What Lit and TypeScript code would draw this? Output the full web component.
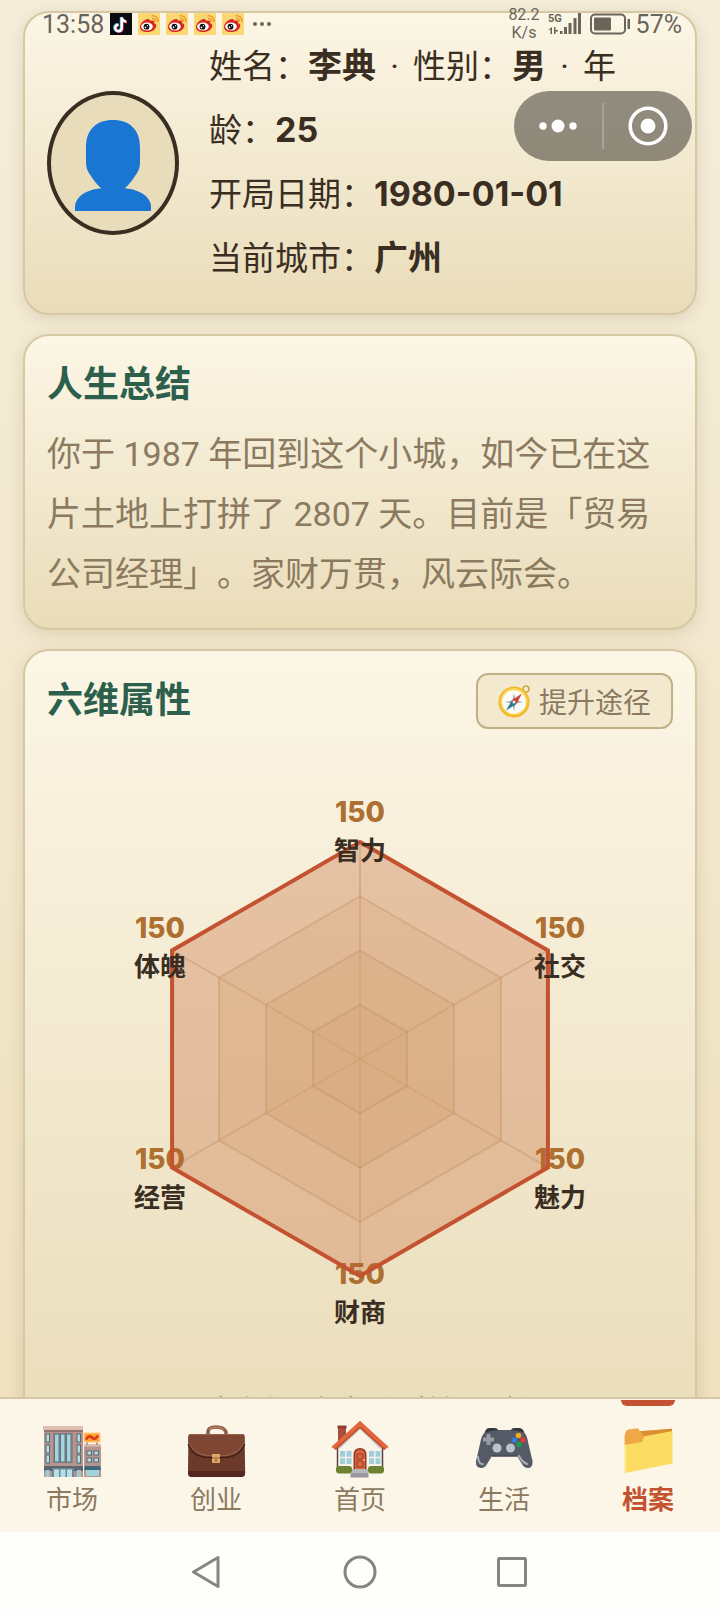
import { LitElement, html, svg, css } from 'lit';
import { customElement, property } from 'lit/decorators.js';
import { classMap } from 'lit/directives/class-map.js';

interface Stat {
  name: string;
  value: number;
}

const MAX_STAT = 150;

const stats: Stat[] = [
  { name: '智力', value: 150 },
  { name: '社交', value: 150 },
  { name: '魅力', value: 150 },
  { name: '财商', value: 150 },
  { name: '经营', value: 150 },
  { name: '体魄', value: 150 },
];

const marketIcon = svg`
  <rect x="2" y="9" width="39" height="48" fill="#b7958f" />
  <rect x="1" y="6" width="40" height="4" fill="#e0bfb0" />
  <rect x="2" y="10" width="39" height="2" fill="#94746f" />
  <rect x="11" y="13" width="20" height="30" fill="#9c7d7a" />
  ${[12, 18, 24].map((x) => svg`<rect x=${x + 0.5} y="14" width="4.5" height="28" fill="#a9d3da" stroke="#557888" />`)}
  ${[14, 25, 35].map(
    (y) => svg`
      <rect x="4" y=${y} width="3.5" height="8" fill="#b9dce0" stroke="#4f6c7c" />
      <rect x="35" y=${y} width="3.5" height="8" fill="#b9dce0" stroke="#4f6c7c" />`
  )}
  <path d="M2 46h39v5H2z" fill="#5d6670" />
  <path d="M10 48h22v9H10z" fill="#6d8792" />
  ${[12, 18.5, 25].map((x) => svg`<rect x=${x} y="49.5" width="5" height="7.5" fill="#b5e0e6" />`)}
  <rect x="3.5" y="50" width="4" height="7" fill="#9ccbd2" />
  <rect x="35" y="50" width="4" height="7" fill="#9ccbd2" />
  <rect x="42" y="25" width="17" height="32" fill="#b7958f" />
  <rect x="42" y="24" width="17" height="2.5" fill="#e0bfb0" />
  <path d="M45 21v4M55 21v4" stroke="#8b8d92" stroke-width="1.5" />
  <rect x="42" y="13" width="16" height="9" fill="#ffa52e" stroke="#ffcf8a" />
  <path d="M44 19.500q3-5 6-2t6-2" fill="none" stroke="#d9381e" stroke-width="2.500" />
  ${[31, 38].map(
    (y) => svg`
      <rect x="45" y=${y} width="4.5" height="4" fill="#b9dce0" stroke="#4f6c7c" />
      <rect x="52" y=${y} width="4.5" height="4" fill="#b9dce0" stroke="#4f6c7c" />`
  )}
  <path d="M43 46h15l1 4H42z" fill="#3b6a7c" />
  <rect x="44" y="50" width="13" height="6" fill="#a3d3da" />`;

const briefcaseIcon = svg`
  <path d="M22 15v-3q0-5 8-5t10 5v3" fill="none" stroke="#8d5a44" stroke-width="3.500" />
  <path d="M23 10q2-3 7-3t8 3" fill="none" stroke="#c08a6c" stroke-width="1.200" />
  <path d="M5 14h51q2.500 0 2.600 3l.6 36q0 4-4 4H6q-4 0-4-4l.4-36q0-3 2.600-3z" fill="#6c3a2b" />
  <path d="M2 51h57v2q0 4-4 4H6q-4 0-4-4z" fill="#53291f" />
  <path d="M5 14h51q2.500 0 2.600 3v8Q54 36 40 37H21Q6 36 2.300 25v-8q.2-3 2.700-3z" fill="#7e4734" />
  <path d="M2.300 24Q6 36 21 37.500h19Q54 36 58.700 24" fill="none" stroke="#3f1f17" stroke-width="1.600" />
  <path d="M2.600 22.500Q7 34 21 35.500h19Q53 34 58.400 22.500" fill="none" stroke="#9c6a52" stroke-width=".8" />
  <path d="M4 14.500h53" stroke="#96604a" stroke-width="1" />
  <rect x="26" y="34" width="8" height="9" rx="1" fill="#e2a868" />
  <path d="M26 38h8" stroke="#8b5a34" stroke-width="1" />
  <circle cx="30" cy="40.500" r="1" fill="#7a4a2a" />`;

const homeIcon = svg`
  <rect x="8" y="6" width="8" height="18" fill="#a84e3c" />
  <rect x="7.500" y="5.500" width="9" height="3" fill="#8d3f32" />
  <path d="M8 26L30 6l22 20v25H8z" fill="#f9f4ea" />
  <path d="M7.500 28v23M52.500 28v23" stroke="#51453f" stroke-width="1.500" />
  <path d="M9 28L30 8l21 20" fill="none" stroke="#cdbdb0" stroke-width="2" />
  <rect x="10" y="31" width="11.500" height="13" fill="#9fd0da" />
  <rect x="39" y="31" width="11.500" height="13" fill="#9fd0da" />
  <path d="M10 37.500h11.500M15.800 31v13M39 37.500h11.500M44.800 31v13" stroke="#f5f1ea" stroke-width="1.500" />
  <path d="M23.500 49V35q0-7 6.500-7t6.500 7v14z" fill="#8e3d2a" />
  <path d="M25 49V35q0-5.500 5-5.500t5 5.500v14z" fill="#d9643f" />
  <path d="M27 34h6v5h-6zM27 41h6v6h-6z" fill="none" stroke="#9f4127" />
  <circle cx="34" cy="40" r="1" fill="#ffd04f" />
  <rect x="6" y="46" width="16" height="7.500" rx="3" fill="#6d8232" />
  <rect x="38" y="46" width="16" height="7.500" rx="3" fill="#6d8232" />
  <path d="M22 49h16v4H22z" fill="#b8b8bb" />
  <path d="M20.500 53h18v4.500h-18z" fill="#97979d" />
  <path d="M30 .7L58.700 27l-4 2.600L30 7.300 5.300 29.600l-4-2.600z" fill="#e2663b" />
  <path d="M5.300 29.600L30 7.300l24.700 22.300" fill="none" stroke="#b5442b" stroke-width="1.300" />`;

const gamepadIcon = svg`
  <path d="M11 12q1-4 5-4h4q3 0 4 2h13q1-2 4-2h3q5 0 6 4 3 3 4.500 12L58.500 41q.5 7-4.500 7-4 0-6-4l-5-8H18l-5 8q-2 4-6 4-5.500 0-5-7L6 24q1.500-9 5-12z" fill="#555b66" />
  <path d="M11 12.500q1-4.500 5-4.500h4q3 0 4 2-6 .5-13 2.500zM50 12.500q-1-4.500-6-4.500h-3q-3 0-4 2 6 .5 13 2.500z" fill="#343840" />
  <path d="M18 36h25" fill="none" stroke="#444954" stroke-width="1.500" />
  <path d="M4 37q1 8 5 7" fill="none" stroke="#a9aeb8" stroke-width="2" stroke-linecap="round" />
  <path d="M45 36q3 6 8 8" fill="none" stroke="#a9aeb8" stroke-width="2" stroke-linecap="round" />
  <path d="M14.500 14v11M9 19.500h11" stroke="#989da7" stroke-width="4" />
  <circle cx="23" cy="28" r="4.500" fill="#bcc3cc" />
  <circle cx="36.500" cy="28" r="4.500" fill="#bcc3cc" />
  <circle cx="44.500" cy="15.500" r="2.800" fill="#f4a62a" />
  <circle cx="40.300" cy="20" r="2.800" fill="#2f7de1" />
  <circle cx="49" cy="20" r="2.800" fill="#dc3b36" />
  <circle cx="45" cy="24.500" r="2.800" fill="#1f9b4c" />`;

const folderIcon = svg`
  <path d="M6.500 16l1.500-5 2-1.500L20 8.300l2 3 32-2.500V40L7 50z" fill="#f0a846" />
  <path d="M22 11.300l32-2.500v3L26 16z" fill="#d98e2f" />
  <path d="M6 25l18-3 2-5.500L54.500 11v32.500L6.500 53.300z" fill="#fddc63" />
  <path d="M6.500 53.300L6 25l1.500-.3.500 27.800z" fill="#fff0a8" />`;

const tabs = [
  { label: '市场', icon: marketIcon },
  { label: '创业', icon: briefcaseIcon },
  { label: '首页', icon: homeIcon },
  { label: '生活', icon: gamepadIcon },
  { label: '档案', icon: folderIcon },
];

/**
 * `<status-bar>` – Phone status line laid over the top of the page.
 */
@customElement('status-bar')
export class StatusBar extends LitElement {
  static styles = css`
    :host {
      display: flex;
      align-items: center;
      height: 48px;
      padding: 0 38px 0 42px;
      box-sizing: border-box;
      color: #6a655b;
      font-family: Roboto, 'Noto Sans CJK SC', sans-serif;
      font-size: 25px;
    }

    svg {
      display: block;
      flex: none;
    }

    .apps {
      display: flex;
      gap: 6px;
      margin: 0 8px 0 6px;
    }

    .right {
      display: flex;
      align-items: center;
      gap: 8px;
      margin-left: auto;
    }

    .speed {
      font-size: 16px;
      line-height: 18px;
      text-align: center;
    }

    .level {
      display: flex;
      align-items: center;
      gap: 5px;
    }
  `;

  renderWeibo() {
    return html`
      <svg width="22" height="22" viewBox="0 0 22 22">
        <rect width="22" height="22" rx="1" fill="#fcd874" />
        <path d="M2 14c0-4 5-8 8-8 2 0 2 1 2 2 3-1 5 0 4 2 2 1 3 2 2 4-1 3-5 5-9 5s-7-2-7-5z" fill="#d8271f" />
        <ellipse cx="9" cy="13.500" rx="5.800" ry="4" fill="#fff" />
        <circle cx="8.500" cy="13.700" r="2.900" fill="#111" />
        <circle cx="7.500" cy="14.300" r=".9" fill="#fff" />
        <circle cx="9.500" cy="12.700" r=".6" fill="#fff" />
        <path d="M14 5.500q3-.5 3.500 3.500M13.500 2.800q6.500-.5 6.500 6.200" fill="none" stroke="#ee9a2c" stroke-width="1.500" />
      </svg>
    `;
  }

  render() {
    return html`
      <span>13:58</span>
      <div class="apps">
        <svg width="22" height="22" viewBox="0 0 22 22">
          <rect width="22" height="22" fill="#0b0912" />
          <g fill="none" stroke-width="2.400">
            <path d="M11 4v10.500a3.300 3.300 0 1 1-3.300-3.300M11 4c.3 2.500 2 4 4.500 4.200" stroke="#39d8d8" />
            <path d="M12.500 5v10.500A3.300 3.300 0 1 1 9 12M12.500 5c.3 2.500 2 4 4.500 4.200" stroke="#ee3157" />
            <path d="M11.800 4.400V15a3.300 3.300 0 1 1-3.300-3.300M11.800 4.400c.3 2.500 2 4 4.500 4.200" stroke="#fff" />
          </g>
        </svg>
        ${[0, 1, 2, 3].map(() => this.renderWeibo())}
      </div>
      <svg width="20" height="6" viewBox="0 0 20 6" fill="currentColor">
        <circle cx="3" cy="3" r="2" />
        <circle cx="10" cy="3" r="2" />
        <circle cx="17" cy="3" r="2" />
      </svg>
      <div class="right">
        <div class="speed">82.2<br />K/s</div>
        <svg width="34" height="22" viewBox="0 0 34 22" fill="currentColor">
          <text x="0" y="9" font-size="11" font-weight="700">5G</text>
          <path d="M4 14v7H2.500v-4.500L0 17zM6 14h1.500v3H10v1.500H7.500V21H6zM12 18h2.500v3H12zM16 14h3v7h-3zM20.500 10h3v11h-3zM25.500 5h3v16h-3zM30 0h3v21h-3z" />
        </svg>
        <div class="level">
          <svg width="41" height="22" viewBox="0 0 41 22">
            <rect x="1" y="1.500" width="34" height="19" rx="4" fill="none" stroke="currentColor" stroke-width="2" />
            <rect x="4" y="4.500" width="17" height="13" rx="1" fill="currentColor" />
            <rect x="37.500" y="6" width="2.500" height="10" fill="currentColor" />
          </svg>
          <span>57%</span>
        </div>
      </div>
    `;
  }
}

/**
 * `<stat-radar>` – Hexagonal radar chart of the character's attributes.
 */
@customElement('stat-radar')
export class StatRadar extends LitElement {
  @property({ attribute: false }) stats: Stat[] = [];

  static styles = css`
    :host {
      display: block;
    }

    svg {
      display: block;
      width: 100%;
      font-family: Inter, 'Noto Sans CJK SC', sans-serif;
    }

    .ring {
      fill: rgba(212, 184, 130, 0.24);
      stroke: rgba(176, 140, 90, 0.28);
      stroke-width: 2;
    }

    .axis {
      stroke: rgba(176, 140, 90, 0.35);
      stroke-width: 2;
    }

    .area {
      fill: rgba(200, 84, 50, 0.22);
      stroke: #c4512f;
      stroke-width: 4;
    }

    .value,
    .name {
      text-anchor: middle;
      font-weight: 700;
    }

    .value {
      fill: #ad7030;
      font-size: 28px;
      font-weight: 800;
    }

    .name {
      fill: #3a2e22;
      font-size: 26px;
    }
  `;

  point(index: number, radius: number) {
    const angle = (Math.PI / 3) * index - Math.PI / 2;
    return { x: 313 + radius * Math.cos(angle), y: 300 + radius * Math.sin(angle) };
  }

  polygon(radiusOf: (index: number) => number) {
    return this.stats
      .map((_, i) => {
        const { x, y } = this.point(i, radiusOf(i));
        return `${x},${y}`;
      })
      .join(' ');
  }

  render() {
    const radius = 217;
    const labels = this.stats.map((stat, i) => ({ ...stat, ...this.point(i, 231) }));
    return html`
      <svg viewBox="0 0 626 600" role="img" aria-label="六维属性">
        ${this.stats.map((_, i) => {
          const { x, y } = this.point(i, radius);
          return svg`<line class="axis" x1="313" y1="300" x2=${x} y2=${y} />`;
        })}
        ${[1, 0.75, 0.5, 0.25].map((step) => svg`<polygon class="ring" points=${this.polygon(() => radius * step)} />`)}
        ${labels.map((l) => svg`<text class="value" x=${l.x} y=${l.y - 6}>${l.value}</text>`)}
        <polygon class="area" points=${this.polygon((i) => (radius * this.stats[i].value) / MAX_STAT)} />
        ${labels.map((l) => svg`<text class="name" x=${l.x} y=${l.y + 32}>${l.name}</text>`)}
      </svg>
    `;
  }
}

/**
 * `<tab-bar>` – Bottom navigation between the game's sections.
 */
@customElement('tab-bar')
export class TabBar extends LitElement {
  @property() active = '';

  static styles = css`
    :host {
      display: block;
      background: #fcf6e8;
      border-top: 2px solid #d6c8a2;
    }

    nav {
      display: grid;
      grid-template-columns: repeat(5, 1fr);
    }

    a {
      position: relative;
      display: flex;
      flex-direction: column;
      align-items: center;
      gap: 4px;
      padding: 21px 0 16px;
      color: #8b7a5f;
      font-size: 26px;
      line-height: 32px;
      text-decoration: none;
    }

    a.active {
      color: #c4512f;
      font-weight: 700;
    }

    a.active::before {
      content: '';
      position: absolute;
      top: 1px;
      width: 54px;
      height: 6px;
      border-radius: 0 0 6px 6px;
      background: #c4512f;
    }

    svg {
      width: 60px;
      height: 60px;
    }
  `;

  render() {
    return html`
      <nav>
        ${tabs.map(
          (tab) => html`
            <a href="#" class=${classMap({ active: tab.label === this.active })}>
              <svg viewBox="0 0 60 60" aria-hidden="true">${tab.icon}</svg>
              <span>${tab.label}</span>
            </a>
          `
        )}
      </nav>
    `;
  }
}

/**
 * `<app-root>` – Character archive page.
 */
@customElement('app-root')
export class AppRoot extends LitElement {
  static styles = css`
    :host {
      position: relative;
      display: flex;
      flex-direction: column;
      height: 100vh;
      overflow: hidden;
      background: #f5ecd7;
      color: #3a2e22;
      font-family: Roboto, 'Noto Sans CJK SC', sans-serif;
      text-spacing-trim: space-all;
    }

    main {
      flex: 1;
      min-height: 0;
      overflow: hidden;
      display: flex;
      flex-direction: column;
      gap: 19px;
      padding: 11px 23px 0;
      background: linear-gradient(#f5edda, #f2e7cb 60%, #efe0bf);
    }

    h2,
    p {
      margin: 0;
    }

    button {
      font: inherit;
      cursor: pointer;
    }

    .card {
      flex: none;
      padding: 22px;
      border: 2px solid #d6c8a2;
      border-radius: 26px;
      background: linear-gradient(#fcf6e6, #e9dcb9);
      box-shadow: 0 4px 16px rgba(90, 65, 20, 0.14);
    }

    .profile {
      display: flex;
      align-items: center;
      gap: 30px;
    }

    .avatar {
      flex: none;
      box-sizing: border-box;
      width: 132px;
      height: 144px;
      border: 4px solid #3a2e22;
      border-radius: 50%;
      background: #e8dcba;
    }

    .avatar svg {
      display: block;
      width: 100%;
      height: 100%;
    }

    .info {
      font-size: 33px;
      line-height: 64px;
    }

    .info b {
      font-family: Inter, 'Noto Sans CJK SC', sans-serif;
      font-size: 34px;
      line-height: 40px;
    }

    .dot {
      margin: 0 6px;
    }

    h2 {
      color: #2d5f4d;
      font-size: 36px;
      font-weight: 700;
      line-height: 54px;
    }

    .summary {
      margin: 12px 0 2px;
      color: #8b7a5f;
      font-size: 34px;
      line-height: 60px;
    }

    .head {
      display: flex;
      align-items: center;
      justify-content: space-between;
    }

    .ways {
      display: flex;
      align-items: center;
      gap: 8px;
      height: 56px;
      padding: 0 20px;
      border: 2px solid #c2b085;
      border-radius: 12px;
      background: #f3e9cf;
      color: #8b7a5f;
      font-size: 28px;
    }

    stat-radar {
      margin-top: 30px;
    }

    .tip {
      display: flex;
      align-items: center;
      justify-content: center;
      gap: 8px;
      margin-top: 30px;
      font-size: 26px;
      line-height: 42px;
    }

    status-bar {
      position: absolute;
      inset: 0 0 auto;
    }

    .capsule {
      position: absolute;
      top: 91px;
      right: 28px;
      display: flex;
      align-items: center;
      width: 178px;
      height: 70px;
      border-radius: 35px;
      background: rgba(60, 55, 48, 0.54);
    }

    .capsule button {
      flex: 1;
      display: flex;
      justify-content: center;
      padding: 0;
      border: 0;
      background: none;
    }

    .capsule button + button {
      border-left: 2px solid #aaa395;
      padding: 3px 0;
    }

    .system {
      flex: none;
      display: flex;
      align-items: center;
      justify-content: center;
      gap: 72px;
      height: 80px;
      background: #fefefc;
    }

    .system button {
      display: flex;
      justify-content: center;
      width: 80px;
      padding: 0;
      border: 0;
      background: none;
    }
  `;

  renderProfile() {
    return html`
      <section class="card profile">
        <div class="avatar">
          <svg viewBox="0 0 124 136" fill="#1976d2">
            <path d="M62 25c17 0 27 10 27 27v14c0 8-2 11-5 15-6 10-13 15-18 16h-8c-5-1-12-6-18-16-3-4-5-7-5-15V52c0-17 10-27 27-27z" />
            <path d="M24 116v-4c0-10 12-19 31-19h14c19 0 31 9 31 19v4z" />
          </svg>
        </div>
        <div class="info">
          <div>
            姓名：<b>李典</b><span class="dot"> · </span>性别：<b>男</b><span class="dot"> · </span>年龄：<b>25</b>
          </div>
          <div>开局日期：<b>1980-01-01</b></div>
          <div>当前城市：<b>广州</b></div>
        </div>
      </section>
    `;
  }

  renderStats() {
    return html`
      <section class="card">
        <div class="head">
          <h2>六维属性</h2>
          <button class="ways">
            <svg width="33" height="34" viewBox="0 0 33 34" aria-hidden="true">
              <circle cx="28" cy="5" r="3" fill="none" stroke="#c9a544" stroke-width="1.500" />
              <circle cx="16" cy="18" r="15.500" fill="#f2b92b" />
              <circle cx="16" cy="17.500" r="13.500" fill="#fbd75a" />
              <circle cx="16" cy="18" r="11.800" fill="#fbfbf8" />
              <path d="M16 9l1.500 7.500L25 18l-7.500 1.500L16 27l-1.500-7.500L7 18l7.500-1.500z" fill="#9aa5ab" />
              <path d="M24 9.500L18.500 20 14 16z" fill="#dc3d3a" />
              <path d="M8 26.500L14 16l4.500 4z" fill="#2e7c8c" />
              <circle cx="16" cy="18" r="1.500" fill="#e9eef0" />
            </svg>
            提升途径
          </button>
        </div>
        <stat-radar .stats=${stats}></stat-radar>
        <p class="tip">
          <svg width="26" height="26" viewBox="0 0 26 26" aria-hidden="true">
            <circle cx="13" cy="10" r="9" fill="#f7c04a" />
            <path d="M9 19h8v5H9z" fill="#8c8c8c" />
          </svg>
          点击右上角查看属性提升途径
        </p>
      </section>
    `;
  }

  render() {
    return html`
      <main>
        ${this.renderProfile()}
        <section class="card">
          <h2>人生总结</h2>
          <p class="summary">
            你于 1987 年回到这个小城，如今已在这片土地上打拼了 2807 天。目前是「贸易公司经理」。家财万贯，风云际会。
          </p>
        </section>
        ${this.renderStats()}
      </main>
      <tab-bar active="档案"></tab-bar>
      <div class="system">
        <button aria-label="返回">
          <svg width="34" height="36" viewBox="0 0 34 36">
            <path d="M27 3.500v29L2.500 18z" fill="none" stroke="#858583" stroke-width="3" stroke-linejoin="round" />
          </svg>
        </button>
        <button aria-label="主屏幕">
          <svg width="34" height="34" viewBox="0 0 34 34">
            <circle cx="17" cy="17" r="15" fill="none" stroke="#858583" stroke-width="3" />
          </svg>
        </button>
        <button aria-label="最近任务">
          <svg width="34" height="34" viewBox="0 0 34 34">
            <rect x="3.500" y="3.500" width="27" height="27" rx="1" fill="none" stroke="#858583" stroke-width="3" />
          </svg>
        </button>
      </div>
      <status-bar></status-bar>
      <div class="capsule">
        <button aria-label="更多">
          <svg width="40" height="14" viewBox="0 0 40 14" fill="#fff">
            <circle cx="5" cy="7" r="3.700" />
            <circle cx="20" cy="7" r="6.500" />
            <circle cx="35" cy="7" r="3.700" />
          </svg>
        </button>
        <button aria-label="关闭">
          <svg width="40" height="40" viewBox="0 0 40 40">
            <circle cx="20" cy="20" r="17.800" fill="none" stroke="#fff" stroke-width="3.500" />
            <circle cx="20" cy="20" r="7.500" fill="#fff" />
          </svg>
        </button>
      </div>
    `;
  }
}
